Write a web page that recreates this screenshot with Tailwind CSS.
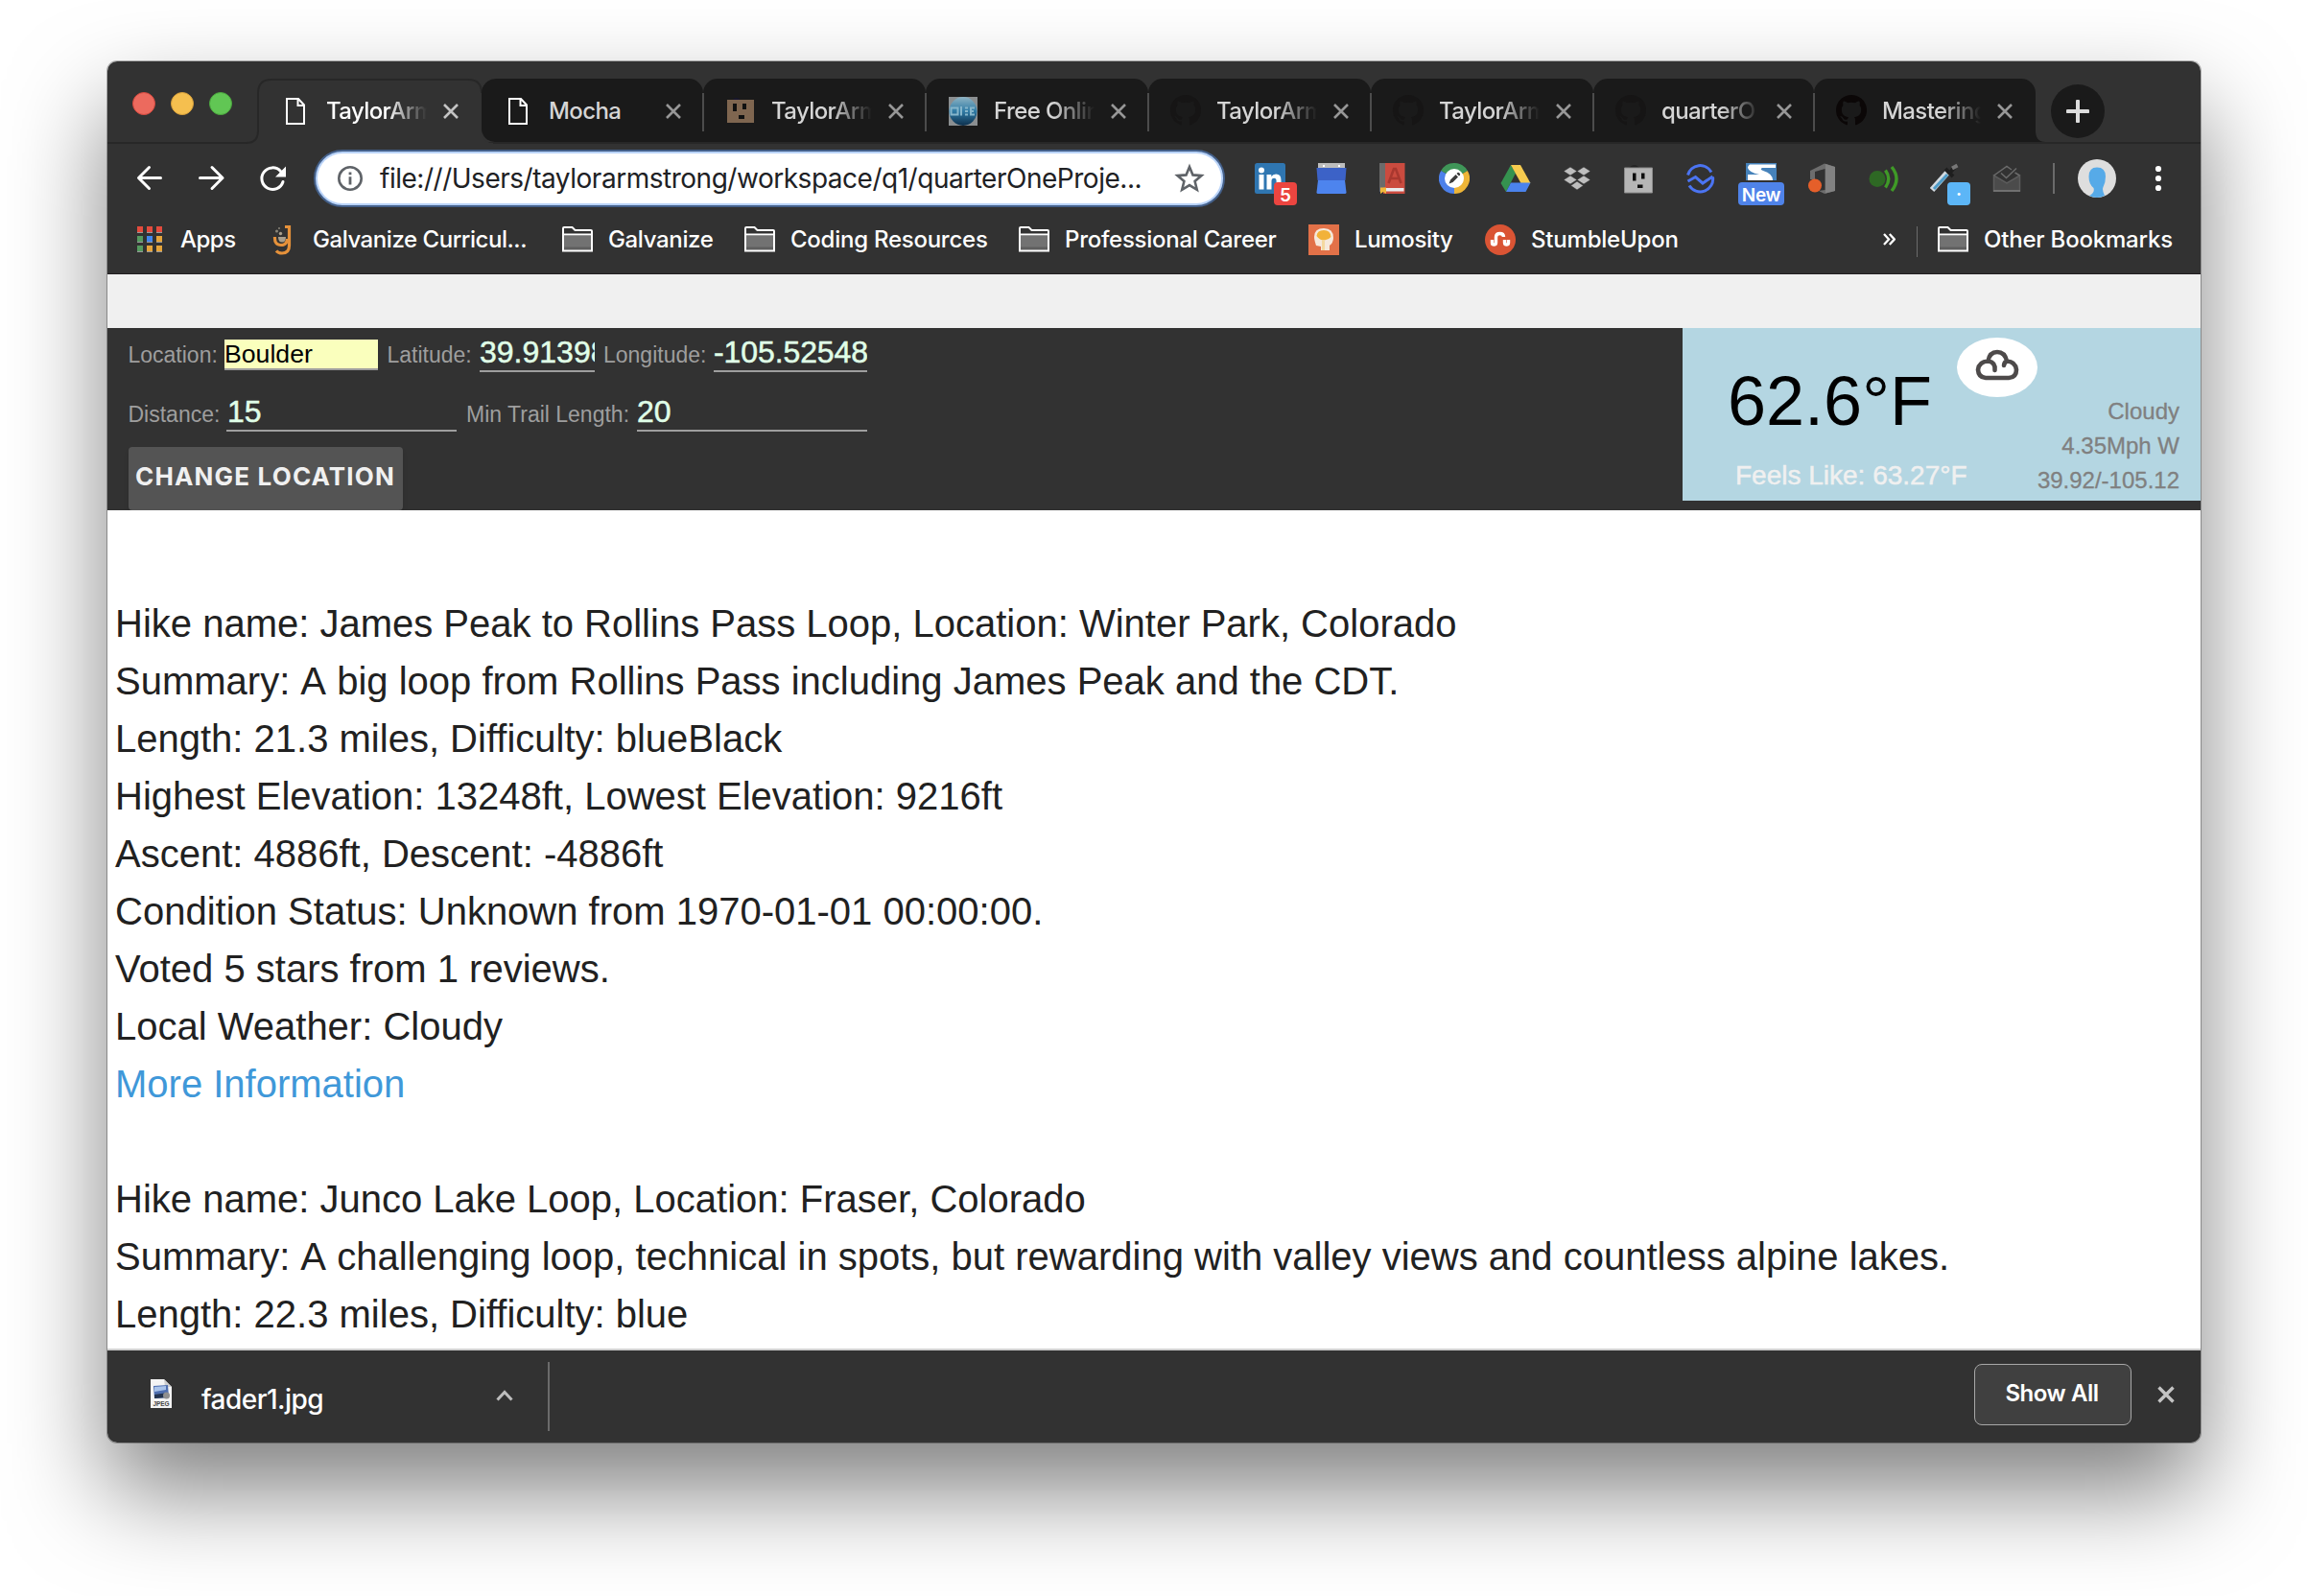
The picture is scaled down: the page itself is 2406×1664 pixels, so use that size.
<!DOCTYPE html>
<html lang="en">
<head>
<meta charset="utf-8">
<title>Trail finder</title>
<script src="https://cdn.jsdelivr.net/npm/@tailwindcss/browser@4"></script>
</head>
<body class="bg-white w-[2406px] h-[1664px] overflow-hidden pt-16 pl-28">

<!-- shared glyphs -->
<svg class="hidden">
  <symbol id="file" viewBox="0 0 32 32"><path d="M7 3H19L25 9.500V29H7Z M18.500 3V10H25" fill="none" stroke="currentColor" stroke-width="2"/></symbol>
  <symbol id="close" viewBox="0 0 16 16"><path d="M1 1L15 15M15 1L1 15" fill="none" stroke="currentColor" stroke-width="2.600"/></symbol>
  <symbol id="github" viewBox="0 0 32 32"><path fill="currentColor" d="M16 0a16 16 0 0 0-5.060 31.180c.8.150 1.090-.35 1.090-.77v-2.980c-4.450.97-5.390-1.890-5.390-1.890-.73-1.850-1.780-2.340-1.780-2.340-1.450-.99.110-.97.110-.97 1.610.110 2.450 1.650 2.450 1.650 1.430 2.450 3.750 1.740 4.660 1.330.150-1.030.56-1.740 1.020-2.140-3.550-.4-7.290-1.780-7.290-7.910 0-1.750.62-3.180 1.650-4.290-.17-.41-.72-2.040.150-4.240 0 0 1.340-.43 4.400 1.640a15.300 15.300 0 0 1 8.010 0c3.050-2.070 4.390-1.640 4.390-1.640.88 2.200.33 3.830.160 4.240a6.200 6.200 0 0 1 1.640 4.290c0 6.150-3.740 7.500-7.310 7.900.58.49 1.090 1.470 1.090 2.960v4.390c0 .43.29.93 1.100.77A16 16 0 0 0 16 0Z"/></symbol>
  <symbol id="folder" viewBox="0 0 32 32"><path d="M2 12H30V26.500H2Z" fill="#727272"/><path d="M2 23.500H30V26.500H2Z" fill="#5f5f5f"/><path d="M1 27.500V4Q1 3 2 3H10.500L13.500 6H30Q31 6 31 7V27.500ZM1 10.500H31" fill="none" stroke="#fff" stroke-width="2"/></symbol>
</svg>

<main class="w-[2182px] h-[1440px] rounded-[10px] overflow-hidden bg-white flex flex-col shadow-[0_0_0_1px_rgba(0,0,0,0.28),0_50px_100px_rgba(0,0,0,0.5)] font-['Inter',sans-serif]">

  <!-- tab strip -->
  <header class="h-[86px] shrink-0 bg-[#323232] border-b-2 border-[#272727] flex items-end text-2xl font-medium tracking-[-0.6px] text-[#d5d5d5]">
    <div class="w-[157px] h-full flex gap-4 pl-[26px] pt-8">
      <i class="size-6 rounded-full bg-[#ec6a5e] border border-[#d5493f]"></i>
      <i class="size-6 rounded-full bg-[#f5bf4f] border border-[#d8a03b]"></i>
      <i class="size-6 rounded-full bg-[#61c654] border border-[#4ba73e]"></i>
    </div>
    <div class="relative w-[233px] h-[66px] flex items-center pl-[23px] text-white">
      <svg class="absolute -left-3 top-0 w-[257px] h-[68px]" viewBox="0 0 257 68"><path d="M0 67Q12 67 12 54V15Q12 1 26 1H231Q245 1 245 15V54Q245 67 257 67V68H0Z" fill="#323232"/><path d="M0 67Q12 67 12 54V15Q12 1 26 1H231Q245 1 245 15" fill="none" stroke="#272727" stroke-width="2"/></svg>
      <svg class="relative size-8 mt-0.5"><use href="#file"/></svg>
      <span class="relative ml-4 w-[105px] mt-0.5 overflow-hidden whitespace-nowrap mask-r-from-60%">TaylorArm</span>
      <svg class="relative ml-[17px] mt-0.5 size-4 text-[#c4c4c4]"><use href="#close"/></svg>
    </div>
    <div class="relative w-[231px] h-[66px] rounded-t-[15px] rounded-bl-[14px] bg-[#1a1a1a] flex items-center pl-[22px]">
      <svg class="size-8 mt-0.5 text-white"><use href="#file"/></svg>
      <span class="ml-4 w-[105px] mt-0.5 overflow-hidden whitespace-nowrap">Mocha</span>
      <svg class="ml-[17px] mt-0.5 size-4 text-[#979797]"><use href="#close"/></svg>
      <i class="absolute -right-px top-[15px] w-0.5 h-10 bg-[#4c4c4c] z-10"></i>
    </div>
    <div class="relative w-[232px] h-[66px] rounded-t-[15px] bg-[#1a1a1a] flex items-center pl-[23px]">
      <svg class="size-8 mt-0.5" viewBox="0 0 32 32"><path d="M7 5Q11 -1 17 5Z" fill="#17162f"/><path d="M2 4H30V28H2Z" fill="#7f6650"/><path d="M8 8H12V16H8ZM18 8H22V14H18ZM14 20H20V24H14Z" fill="#111"/></svg>
      <span class="ml-4 w-[105px] mt-0.5 overflow-hidden whitespace-nowrap mask-r-from-60%">TaylorArm</span>
      <svg class="ml-[17px] mt-0.5 size-4 text-[#979797]"><use href="#close"/></svg>
      <i class="absolute -right-px top-[15px] w-0.5 h-10 bg-[#4c4c4c] z-10"></i>
    </div>
    <div class="relative w-[232px] h-[66px] rounded-t-[15px] bg-[#1a1a1a] flex items-center pl-[23px]">
      <svg class="size-8 mt-1" viewBox="0 0 32 32"><defs><linearGradient id="orb" x2="0" y2="1"><stop stop-color="#8fb4c4"/><stop offset=".5" stop-color="#2f7ba5"/><stop offset="1" stop-color="#0d2f4c"/></linearGradient></defs><path d="M1 0H31V30H1Z" fill="#8b8f91"/><ellipse cx="16" cy="15" rx="14.500" ry="15" fill="url(#orb)"/><path d="M3.500 11.500H10.500V18.500H3.500ZM14 10V19.500M18 11.500H21M18 18.500H21M18 15H21M28 11.500H24V18.500H28M24 15H27" fill="none" stroke="#86b6cb" stroke-width="2"/></svg>
      <span class="ml-4 w-[105px] mt-0.5 overflow-hidden whitespace-nowrap mask-r-from-60%">Free Onlin</span>
      <svg class="ml-[17px] mt-0.5 size-4 text-[#979797]"><use href="#close"/></svg>
      <i class="absolute -right-px top-[15px] w-0.5 h-10 bg-[#4c4c4c] z-10"></i>
    </div>
    <div class="relative w-[232px] h-[66px] rounded-t-[15px] bg-[#1a1a1a] flex items-center pl-[23px]">
      <svg class="size-8 text-[#161515]"><use href="#github"/></svg>
      <span class="ml-4 w-[105px] mt-0.5 overflow-hidden whitespace-nowrap mask-r-from-60%">TaylorArm</span>
      <svg class="ml-[17px] mt-0.5 size-4 text-[#979797]"><use href="#close"/></svg>
      <i class="absolute -right-px top-[15px] w-0.5 h-10 bg-[#4c4c4c] z-10"></i>
    </div>
    <div class="relative w-[232px] h-[66px] rounded-t-[15px] bg-[#1a1a1a] flex items-center pl-[23px]">
      <svg class="size-8 text-[#161515]"><use href="#github"/></svg>
      <span class="ml-4 w-[105px] mt-0.5 overflow-hidden whitespace-nowrap mask-r-from-60%">TaylorArm</span>
      <svg class="ml-[17px] mt-0.5 size-4 text-[#979797]"><use href="#close"/></svg>
      <i class="absolute -right-px top-[15px] w-0.5 h-10 bg-[#4c4c4c] z-10"></i>
    </div>
    <div class="relative w-[230px] h-[66px] rounded-t-[15px] bg-[#1a1a1a] flex items-center pl-[23px]">
      <svg class="size-8 text-[#161515]"><use href="#github"/></svg>
      <span class="ml-4 w-[103px] mt-0.5 overflow-hidden whitespace-nowrap mask-r-from-60%">quarterO</span>
      <svg class="ml-[17px] mt-0.5 size-4 text-[#979797]"><use href="#close"/></svg>
      <i class="absolute -right-px top-[15px] w-0.5 h-10 bg-[#4c4c4c] z-10"></i>
    </div>
    <div class="relative w-[231px] h-[66px] rounded-t-[15px] bg-[#1a1a1a] flex items-center pl-[23px]">
      <svg class="size-8 text-[#0b0707]"><use href="#github"/></svg>
      <span class="ml-4 w-[103px] mt-0.5 overflow-hidden whitespace-nowrap mask-r-from-60%">Mastering</span>
      <svg class="ml-[17px] mt-0.5 size-4 text-[#979797]"><use href="#close"/></svg>
      <svg class="absolute -right-[10px] bottom-0 w-[10px] h-3" viewBox="0 0 10 12"><path d="M0 0Q0 12 10 12H0Z" fill="#1a1a1a"/></svg>
    </div>
    <div class="ml-4 mb-1 size-14 rounded-full bg-[#1a1a1a] flex items-center justify-center">
      <svg class="size-6" viewBox="0 0 24 24"><path d="M12 1.500V22.500M1.500 12H22.500" stroke="#dcdcdc" stroke-width="4" stroke-linecap="round"/></svg>
    </div>
  </header>

  <!-- toolbar -->
  <div class="h-[72px] shrink-0 bg-[#323232] flex items-center pl-7">
    <svg class="size-8" viewBox="0 0 32 32"><path d="M27.500 15.500H5M15.500 4.500L4.500 15.500L15.500 26.500" fill="none" stroke="#fff" stroke-width="3" stroke-linecap="round" stroke-linejoin="round"/></svg>
    <svg class="ml-8 size-8" viewBox="0 0 32 32"><path d="M4.500 15.500H28M17 4.500L28 15.500L17 26.500" fill="none" stroke="#fff" stroke-width="3" stroke-linecap="round" stroke-linejoin="round"/></svg>
    <svg class="ml-8 size-8" viewBox="0 0 32 32"><path d="M27 19.500A11.300 11.300 0 1 1 24.500 8.500" fill="none" stroke="#fff" stroke-width="3" stroke-linecap="round"/><path d="M30 3.500V14.500H19Z" fill="#fff"/></svg>
    <div class="ml-[27px] w-[950px] h-[60px] rounded-full border-2 border-[#44608a] bg-[#b9d3f8] p-0.5">
      <div class="h-full rounded-full bg-white flex items-center pl-5 pr-[17px]">
        <svg class="size-7" viewBox="0 0 28 28"><circle cx="14" cy="14" r="11.700" fill="none" stroke="#5f6368" stroke-width="2.600"/><path d="M12.600 7.500H15.400V10.300H12.600ZM12.600 12.300H15.400V20.500H12.600Z" fill="#5f6368"/></svg>
        <span class="ml-[17px] text-[28px] tracking-[-0.48px] text-[#202124] whitespace-nowrap">file:///Users/taylorarmstrong/workspace/q1/quarterOneProje...</span>
        <svg class="ml-auto size-8" viewBox="0 0 32 32"><path d="M16 4L19.500 12.400L28.500 13.100L21.600 19L23.800 27.800L16 23.100L8.200 27.800L10.400 19L3.500 13.100L12.500 12.400Z" fill="none" stroke="#5f6368" stroke-width="2.600"/></svg>
      </div>
    </div>

    <!-- extensions -->
    <div class="ml-[31px] flex gap-8">
      <div class="relative size-8">
        <svg class="size-8" viewBox="0 0 32 32"><rect width="32" height="32" rx="2.500" fill="#2f76b1"/><circle cx="7" cy="7.500" r="3" fill="#fff"/><path d="M4.500 12H9.500V27.500H4.500ZM12.500 12H17.300V14.200Q18.800 11.600 22.200 11.600Q27.500 11.600 27.500 18V27.500H22.600V19Q22.600 15.800 20.200 15.800Q17.500 15.800 17.500 19V27.500H12.500Z" fill="#fff"/></svg>
        <b class="absolute left-5 top-5 w-6 h-6 rounded bg-[#ec4540] text-white text-[19px] leading-[27px] text-center font-semibold">5</b>
      </div>
      <svg class="size-8" viewBox="0 0 32 32"><path d="M2 0H30V6H2Z" fill="#bdbdbd"/><path d="M7 2h2v2H7ZM23 2h2v2h-2Z" fill="#fff"/><path d="M.5 5H31.500L30.500 18H1.500Z" fill="#3c62c7"/><path d="M2 18H30L31.500 30.500Q31.500 32 30 32H2Q.5 32 .5 30.500Z" fill="#4d84ee"/></svg>
      <svg class="size-8" viewBox="0 0 32 32"><path d="M2 0H8V28L2 30Z" fill="#6b6b6b"/><path d="M8 0H28.500V32H6V25H8Z" fill="#cb4b3f"/><path d="M9 26H27.500V29.500H9Z" fill="#e9ecee"/><path d="M3 25.500H9V32L6 30L3 32Z" fill="#f0b93c"/><path d="M11.500 21L17 6H19L24.500 21M13.500 16H22.500" fill="none" stroke="#a9382f" stroke-width="2.600"/></svg>
      <svg class="size-8" viewBox="0 0 32 32"><path d="M16 16L2.140 8A16 16 0 0 1 29.860 8Z" fill="#3f9658"/><path d="M16 16L29.860 8A16 16 0 0 1 16 32Z" fill="#eeb537"/><path d="M16 16V32A16 16 0 0 1 2.140 8Z" fill="#4c80ea"/><circle cx="16" cy="16" r="10" fill="#fff"/><path d="M10.500 21.500L12 17.500L17.500 12L20 14.500L14.500 20ZM18.500 11L19.500 10Q20.500 9.500 21.500 10.500Q22.500 11.500 22 12.500L21 13.500Z" fill="#3b3b3b"/></svg>
      <svg class="size-8" viewBox="0 0 32 32"><path d="M11 2L16 10.500L6 30L.5 21Z" fill="#35924f"/><path d="M11 2H21L31.500 21H21.500Z" fill="#f6cb4f"/><path d="M11 20.500H31.500L26.500 30H6Z" fill="#4b83ec"/></svg>
      <svg class="size-8" viewBox="0 0 32 32" fill="#bebebe"><path d="M9 4L16 8.500L9 13L2 8.500ZM23 4L30 8.500L23 13L16 8.500ZM9 13L16 17.500L9 22L2 17.500ZM23 13L30 17.500L23 22L16 17.500ZM16 19L22.500 23.500L16 28L9.500 23.500Z" stroke="#323232" stroke-width=".6"/></svg>
      <svg class="size-8" viewBox="0 0 32 32"><path d="M6 5Q12 -1 17 5Z" fill="#232323"/><path d="M1.500 5H30.500V31H1.500Z" fill="#b5b5b5" stroke="#8d8d8d"/><path d="M10 10.500H13.500V18.500H10ZM19 10.500H22.500V16.500H19ZM15 22.500H20.500V26H15Z" fill="#0d0d0d"/></svg>
      <svg class="size-8" viewBox="0 0 32 32" fill="none" stroke="#4b74f2" stroke-width="3"><path d="M3.500 12.500A13.300 13.300 0 0 1 28 9.500M5 23.500A13.300 13.300 0 0 0 29.500 14.500M3.500 19L11.500 14.500L19 21L29.500 14"/></svg>
      <div class="relative size-8">
        <svg class="size-8" viewBox="0 0 32 32"><path d="M0 0H32V18H0Z" fill="#4682ba"/><path d="M4 1.500H31V5H17Q14 6.500 18 8Q28 11 28 18H2V12H14Q3 9.500 2 5Q2 2.500 4 1.500Z" fill="#fff"/></svg>
        <b class="absolute -left-2 top-5 w-12 h-6 rounded bg-[#4f83e9] text-white text-[19px] leading-[27px] text-center font-semibold tracking-[-0.3px]">New</b>
      </div>
      <svg class="size-8" viewBox="0 0 32 32"><path d="M3 8L18 .5L29 4V29L18 32L12 29L18.500 28V6L8 9V17H3Z" fill="#6d6d6d"/><path d="M19 1L29 4V29L19 31.500Z" fill="#828282"/><circle cx="8" cy="23.500" r="7" fill="#e55f2a"/></svg>
      <svg class="size-8" viewBox="0 0 32 32" fill="none" stroke="#3f9a27" stroke-width="3.400"><circle cx="9" cy="16.500" r="8.500" fill="#2e6824" stroke="none"/><path d="M17.500 7.500Q24 16.500 17.500 25.500M24 4Q34 16.500 24 29"/></svg>
      <div class="relative size-8">
        <svg class="size-8" viewBox="0 0 32 32"><path d="M2 28L18 10" stroke="#d3dbe0" stroke-width="6"/><path d="M4 27L18 12" stroke="#4e9cc9" stroke-width="3"/><path d="M16 6L24 14M19 12L26 4" stroke="#1e1e1e" stroke-width="4"/><path d="M23 5.500L28.500 2.500" stroke="#777" stroke-width="4"/></svg>
        <b class="absolute left-[18px] top-5 w-6 h-6 rounded bg-[#5cb6f7] text-white text-[19px] leading-[25px] text-center font-semibold">·</b>
      </div>
      <svg class="size-8" viewBox="0 0 32 32"><path d="M2.500 13L16 21L29.500 13V29H2.500Z" fill="#4b4b4b" stroke="#5c5c5c" stroke-width="1.500"/><path d="M2.500 13L16 3.500L21 7M10 10.500L15.500 15.500L26 5.500M29.500 13L24.500 10" fill="none" stroke="#6b6b6b" stroke-width="1.500"/><path d="M2 29H30" stroke="#7a7a7a" stroke-width="1.500"/></svg>
    </div>
    <i class="ml-8 w-0.5 h-8 bg-[#6b6b6b]"></i>
    <svg class="ml-6 size-10" viewBox="0 0 40 40"><circle cx="20" cy="20" r="20" fill="#dedede"/><path d="M20 8.500Q29 8.500 29 18Q29 24 26.500 29Q25 32 28 38Q20 42 12 38Q18 35 16.500 30Q11.500 26 11.500 18Q11.500 8.500 20 8.500Z" fill="#56aae8"/></svg>
    <svg class="ml-[40px] w-2 h-8" viewBox="0 0 8 32" fill="#fff"><circle cx="4" cy="6" r="3.100"/><circle cx="4" cy="16" r="3.100"/><circle cx="4" cy="26" r="3.100"/></svg>
  </div>

  <!-- bookmarks -->
  <nav class="h-16 shrink-0 bg-[#323232] border-b border-[#211d20] flex items-center pb-[7px] pl-7 pr-[30px] text-2xl font-medium tracking-[-0.35px] text-white whitespace-nowrap">
    <svg class="size-8 -mt-0.5" viewBox="0 0 32 32"><path d="M3 9H9V10H3ZM13 9H19V10H13ZM23 9H29V10H23ZM3 19H9V20H3ZM13 19H19V20H13ZM23 19H29V20H23ZM3 29H9V30H3ZM13 29H19V30H13ZM23 29H29V30H23Z" fill="#9a9a9a"/><path d="M3 3H9V9H3ZM13 3H19V9H13ZM23 3H29V9H23Z" fill="#e34b3d"/><path d="M3 13H9V19H3ZM3 23H9V29H3Z" fill="#559a5f"/><path d="M13 13H19V19H13Z" fill="#4086ee"/><path d="M23 13H29V19H23ZM13 23H19V29H13ZM23 23H29V29H23Z" fill="#e6a43a"/></svg>
    <span class="ml-4 w-[57px] tracking-[-0.5px]">Apps</span>
    <svg class="ml-[33px] size-8" viewBox="0 0 32 32" fill="none"><path d="M8.500 13Q8 21.500 15 21.500Q21 21.500 21.500 15M19 2.500H23.500V22Q23.500 30 16 30Q12 30 10 27.500" stroke="#e5913a" stroke-width="3.200"/><path d="M12 13H20Q20 18.500 16 18.500Q12 18.500 12 13Z" fill="#a99f8d"/><circle cx="10.500" cy="7" r="1.500" fill="#8a8579"/><circle cx="14.500" cy="9.500" r="1.700" fill="#a99f8d"/><circle cx="13" cy="4" r="1" fill="#8a8579"/></svg>
    <span class="ml-4 w-[227px] tracking-[-0.45px]">Galvanize Curricul...</span>
    <svg class="ml-[33px] size-8"><use href="#folder"/></svg>
    <span class="ml-4 w-[109px]">Galvanize</span>
    <svg class="ml-[33px] size-8"><use href="#folder"/></svg>
    <span class="ml-4 w-[205px] tracking-[-0.25px]">Coding Resources</span>
    <svg class="ml-[33px] size-8"><use href="#folder"/></svg>
    <span class="ml-4 w-[221px] tracking-[-0.27px]">Professional Career</span>
    <svg class="ml-[33px] size-8" viewBox="0 0 32 32"><path d="M0 0H32V32H0Z" fill="#e27148"/><path d="M8 22Q6 16 6 13Q6 4 16 4Q26 4 26 14Q26 19 22 22V27H13V23Z" fill="#f6e9dc"/><path d="M8.500 12Q9 6 16 6Q23 6 23.500 13Q20 17 16 16Q12 17 8.500 12Z" fill="#f2b23a"/><path d="M14 16H17V27H14Z" fill="#f4d9a0"/></svg>
    <span class="ml-4 w-[103px]">Lumosity</span>
    <svg class="ml-[33px] size-8" viewBox="0 0 32 32"><circle cx="16" cy="16" r="16" fill="#da5434"/><path d="M7.500 16V19.500Q7.500 21 9.500 21Q11.500 21 11.500 19V13Q11.500 9.500 15.500 9.500Q19.500 9.500 19.500 13M20.500 16V19Q20.500 21 22.500 21Q24.500 21 24.500 19V16" fill="none" stroke="#fff" stroke-width="3.400"/></svg>
    <span class="ml-4 tracking-[-0.2px]">StumbleUpon</span>
    <svg class="ml-auto w-[13px] h-4" viewBox="0 0 13 16"><path d="M1 2L6 7.500L1 13M6.800 2L11.800 7.500L6.800 13" fill="none" stroke="#fff" stroke-width="2.300"/></svg>
    <i class="ml-[22px] mt-1 w-px h-8 bg-[#6b6b6b]"></i>
    <svg class="ml-[21px] size-8"><use href="#folder"/></svg>
    <span class="ml-4 w-[196px] tracking-[-0.2px]">Other Bookmarks</span>
  </nav>

  <!-- page -->
  <div class="h-14 shrink-0 bg-[#f0f0f0]"></div>
  <section class="h-[190px] shrink-0 bg-[#323232] flex justify-between overflow-hidden font-['Liberation_Sans',Arial,sans-serif]">
    <form class="pl-[21.5px] text-[23px] text-[#9e9e9e]">
      <div class="flex h-[62px]">
        <label class="w-[100.5px] pt-[10px] leading-9">Location:</label>
        <div class="mt-3 w-[160px] h-8 bg-[#faffbd] border-b-2 border-[#9e9e9e] text-black text-[26.67px] leading-[30px]">Boulder</div>
        <label class="ml-[9.5px] w-[96.5px] pt-[10px] leading-9">Latitude:</label>
        <div class="mt-1 w-[120px] h-[42px] border-b-2 border-[#9e9e9e] text-[#e0ffe8] text-[32px] leading-[42px] overflow-hidden [-webkit-text-stroke:0.5px]">39.91398</div>
        <label class="ml-[9px] w-[115px] pt-[10px] leading-9">Longitude:</label>
        <div class="mt-1 w-[160px] h-[42px] border-b-2 border-[#9e9e9e] text-[#e0ffe8] text-[32px] leading-[42px] tracking-[-0.1px] overflow-hidden [-webkit-text-stroke:0.5px]">-105.52548</div>
      </div>
      <div class="flex h-[62px]">
        <label class="w-[102.5px] pt-[10px] leading-9">Distance:</label>
        <div class="mt-1 w-[240px] h-[42px] pl-px border-b-2 border-[#9e9e9e] text-[#e0ffe8] text-[32px] leading-[42px] [-webkit-text-stroke:0.5px]">15</div>
        <label class="ml-[10px] w-[178px] pt-[10px] leading-9">Min Trail Length:</label>
        <div class="mt-1 w-[240px] h-[42px] border-b-2 border-[#9e9e9e] text-[#e0ffe8] text-[32px] leading-[42px] [-webkit-text-stroke:0.5px]">20</div>
      </div>
      <button type="button" class="ml-[0.5px] w-[286px] h-[66px] pl-[7px] pb-1.5 rounded bg-[#545454] shadow-md text-left text-[26px] font-bold tracking-[1.17px] text-[#f0f0f0] whitespace-nowrap font-['Inter',sans-serif]">CHANGE LOCATION</button>
    </form>
    <aside class="w-[540px] h-[180px] bg-[#b4d6e2] flex">
      <div class="w-[286px] shrink-0 whitespace-nowrap">
        <p class="pt-[40px] pl-[47px] text-[72px] leading-[72px] text-black">62.6°F</p>
        <p class="mt-[26px] pl-[55px] text-[28px] leading-8 text-[#f0f0f0] [-webkit-text-stroke:0.5px]">Feels Like: 63.27°F</p>
      </div>
      <div class="mt-[10px] w-[84px] h-[62px] shrink-0 rounded-[50%] bg-white flex items-center justify-center">
        <svg class="w-[46px] h-9 -mt-1" viewBox="0 0 46 36" fill="none" stroke="#4d4a4a" stroke-width="4.600" stroke-linecap="round"><path d="M11 31H35Q43 30.500 43 22.500Q42 14 33 13.500Q31 4 23 4Q15 4 13.500 13.500Q4 14 3 22.500Q3.500 30.500 11 31ZM14 13.500Q21.500 15 20.500 23M33 13.500Q30.500 14.500 30 18"/></svg>
      </div>
      <div class="-ml-4 flex-1 pr-[22px] pt-[69px] text-right text-2xl leading-9 text-[#808080] [-webkit-text-stroke:0.3px]"><p>Cloudy</p><p>4.35Mph W</p><p>39.92/-105.12</p></div>
    </aside>
  </section>

  <article class="flex-1 min-h-0 overflow-hidden pt-[88px] pl-2 font-['Liberation_Sans',Arial,sans-serif] text-[40px] leading-[60px] text-[#212121] whitespace-nowrap">
    <div class="mb-[60px]">
      <p>Hike name: James Peak to Rollins Pass Loop, Location: Winter Park, Colorado</p>
      <p>Summary: <span class="inline-block">A</span> big loop from Rollins Pass including James Peak and the CDT.</p>
      <p>Length: 21.3 miles, Difficulty: blueBlack</p>
      <p>Highest Elevation: 13248ft, Lowest Elevation: 9216ft</p>
      <p>Ascent: 4886ft, Descent: -4886ft</p>
      <p>Condition Status: Unknown from 1970-01-01 00:00:00.</p>
      <p>Voted 5 stars from 1 reviews.</p>
      <p>Local Weather: Cloudy</p>
      <p><a class="text-[#3f98d9]">More Information</a></p>
    </div>
    <div>
      <p>Hike name: Junco Lake Loop, Location: Fraser, Colorado</p>
      <p>Summary: <span class="inline-block">A</span> challenging loop, technical in spots, but rewarding with valley views and countless alpine lakes.</p>
      <p>Length: 22.3 miles, Difficulty: blue</p>
    </div>
  </article>

  <!-- download shelf -->
  <footer class="h-[98px] shrink-0 bg-[#323232] border-t-2 border-[#d0d0d0] flex items-center text-white">
    <svg class="ml-[44px] -mt-1.5 w-6 h-8" viewBox="0 0 24 32"><path d="M1 1H15L23 9V31H1Z" fill="#f4f4f4"/><path d="M15 1L23 9H16Z" fill="#cfcfcf"/><path d="M4 8L19 7L20 20L5 21Z" fill="#4f6fb0"/><path d="M5 9L17 8V12L5 14Z" fill="#a9c3ea"/><path d="M5 17L19 15V20L5 21Z" fill="#24344f"/><circle cx="17.500" cy="18" r="3.500" fill="#8f8f8f"/><text x="3.500" y="29" font-family="Liberation Sans" font-weight="bold" font-size="6.500" textLength="17" fill="#444">JPEG</text></svg>
    <span class="ml-[30px] mt-1.5 w-[128px] text-[28px] font-medium tracking-[-0.54px]">fader1.jpg</span>
    <svg class="ml-[179px] -mt-0.5 w-[18px] h-3" viewBox="0 0 18 12"><path d="M1.500 10.500L9 2.500L16.500 10.500" fill="none" stroke="#bdbdbd" stroke-width="3"/></svg>
    <i class="ml-9 w-0.5 h-[72px] bg-[#6b6b6b]"></i>
    <button type="button" class="ml-auto mr-[27px] w-[164px] h-16 -mt-1 pr-0.5 pb-0.5 rounded-lg border border-[#a8a8a8] bg-[#404040] text-2xl font-semibold tracking-[-0.45px]">Show All</button>
    <svg class="mr-[27px] -mt-1 size-[18px] text-[#c4c4c4]" viewBox="0 0 18 18"><path d="M1.500 1.500L16.500 16.500M16.500 1.500L1.500 16.500" stroke="currentColor" stroke-width="3.400"/></svg>
  </footer>
</main>
</body>
</html>
